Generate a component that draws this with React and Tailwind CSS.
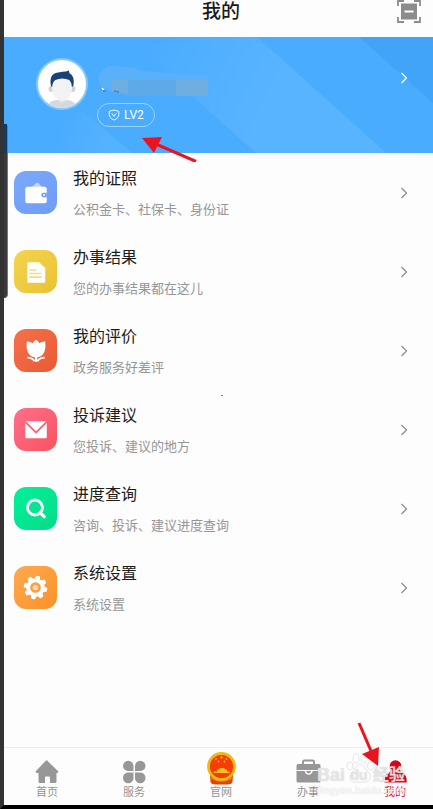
import React from 'react';

const menuItems = [
  { title: '我的证照', desc: '公积金卡、社保卡、身份证', icon: WalletIcon, bg: 'from-[#7aa9fa] to-[#6f9cf8]' },
  { title: '办事结果', desc: '您的办事结果都在这儿', icon: FileIcon, bg: 'from-[#f3d54e] to-[#e9c233]' },
  { title: '我的评价', desc: '政务服务好差评', icon: TulipIcon, bg: 'from-[#f5714a] to-[#e85a34]' },
  { title: '投诉建议', desc: '您投诉、建议的地方', icon: MailIcon, bg: 'from-[#ff6f8a] to-[#f9525f]' },
  { title: '进度查询', desc: '咨询、投诉、建议进度查询', icon: SearchIcon, bg: 'from-[#02f09a] to-[#07dc88]' },
  { title: '系统设置', desc: '系统设置', icon: GearIcon, bg: 'from-[#ffa950] to-[#fb9123]' },
];

const tabs = [
  { label: '首页', icon: HomeIcon },
  { label: '服务', icon: CloverIcon },
  { label: '官网', icon: EmblemIcon },
  { label: '办事', icon: BriefcaseIcon },
  { label: '我的', icon: PersonIcon, active: true },
];

function WalletIcon() {
  return (
    <svg viewBox="0 0 42 42" className="size-full">
      <path d="M17 16l5-4.500 2 .5 4 4z" fill="#c3d6fd" />
      <rect x="11" y="15.500" width="21" height="16" rx="2" fill="#fff" />
      <path d="M32 21.300h-3.200a2.200 2.200 0 0 0 0 4.400H32z" fill="#6f9ff8" />
      <circle cx="29.300" cy="23.500" r="1" fill="#fff" />
    </svg>
  );
}

function FileIcon() {
  return (
    <svg viewBox="0 0 42 42" className="size-full">
      <path d="M14 12h10.500l6 5.500V31q0 1-1 1H14q-1 0-1-1V13q0-1 1-1z" fill="#fff" />
      <path d="M15 19.500h7M15 23h12M15 26.500h12" stroke="#f2dc86" strokeWidth="1.600" />
    </svg>
  );
}

function TulipIcon() {
  return (
    <svg viewBox="0 0 42 42" className="size-full" fill="#fff">
      <path d="M21.500 10.500c1.200.6 2.500 2 3.200 3.300 1.600-1 3.800-1.600 5.700-1.600.5 3.600.5 7.300-.8 10.200-1.300 2.900-3.800 4.900-6.800 5.200V32h-2.400v-4.400c-3-.3-5.700-2.300-7-5.200-1.300-2.900-1.300-6.600-.8-10.200 1.900 0 4.100.6 5.700 1.600.7-1.300 2-2.700 3.200-3.300z" />
      <path d="M13 28c3 0 5.600 1 7 3.500M30 28c-3 0-5.600 1-7 3.500" fill="none" stroke="#fff" strokeWidth="1.800" />
    </svg>
  );
}

function MailIcon() {
  return (
    <svg viewBox="0 0 42 42" className="size-full">
      <rect x="11" y="13" width="21" height="16.500" rx="1" fill="#fff" />
      <path d="M11 13.500l10.500 10.500L32 13.500" fill="none" stroke="#fb6077" strokeWidth="1.800" />
    </svg>
  );
}

function SearchIcon() {
  return (
    <svg viewBox="0 0 42 42" className="size-full" fill="none" stroke="#fff">
      <circle cx="20.500" cy="20" r="7.300" strokeWidth="2.800" />
      <path d="M25.500 25l4 4" strokeWidth="3.200" strokeLinecap="round" />
    </svg>
  );
}

function GearIcon() {
  return (
    <svg viewBox="0 0 42 42" className="size-full">
      <g fill="#fff" transform="rotate(12 21 21)">
        <circle cx="21" cy="21" r="9" />
        {[0, 45, 90, 135, 180, 225, 270, 315].map((deg) => (
          <path key={deg} d="M19 12.500l.5-2.500h3l.5 2.500z" stroke="#fff" strokeLinejoin="round" transform={`rotate(${deg} 21 21)`} />
        ))}
      </g>
      <circle cx="21" cy="21" r="4" fill="#ffd9ac" stroke="#fd9c3a" strokeWidth="2.400" />
    </svg>
  );
}

function HomeIcon() {
  return (
    <svg viewBox="0 0 30 34" className="h-[34px] w-[30px]">
      <path d="M15 9.500L26.500 20.500 25.500 22H24.500v8.500q0 1.500-1.500 1.500h-5v-5.500q0-1-1-1h-3q-1 0-1 1V32H8q-1.500 0-1.500-1.500V22H4.500l-1-1.500L13.500 10q1.500-1.300 3 0z" fill="#979797" />
    </svg>
  );
}

function CloverIcon() {
  return (
    <svg viewBox="0 0 30 34" className="h-[34px] w-[30px]" fill="#979797">
      <path d="M4 15a5 5 0 0 1 10.500 0v5H9a5 5 0 0 1-5-5z" />
      <path d="M26.500 15a5 5 0 0 0-10.500 0v5h5.500a5 5 0 0 0 5-5z" />
      <path d="M4 27a5 5 0 0 0 10.500 0v-5.500H9A5 5 0 0 0 4 27z" />
      <path d="M26.500 27a5 5 0 0 1-10.500 0v-5.500h5.500a5 5 0 0 1 5 5.500z" />
    </svg>
  );
}

function EmblemIcon() {
  return (
    <svg viewBox="0 0 30 34" className="h-[34px] w-[30px]">
      <path d="M4 24h23l-.5 7q-1 2.500-5 2.500h-12q-4 0-5-2.500z" fill="#e8400b" />
      <path d="M5 27q10 6 21 0" stroke="#f07a12" strokeWidth="1.500" fill="none" />
      <circle cx="15.500" cy="15.500" r="13" fill="#f53d04" stroke="#edb912" strokeWidth="2.800" />
      <path d="M11 18.500h1.500L14 17h4l1.500 1.500H21v2h2.500V22h-16v-1.500H11z" fill="#ffbd22" />
      <g fill="#ffb020">
        <circle cx="15.500" cy="6.500" r="1.200" />
        <circle cx="10" cy="8" r=".9" />
        <circle cx="20.500" cy="8" r=".9" />
        <circle cx="12.500" cy="10.500" r=".9" />
        <circle cx="18.500" cy="10.500" r=".9" />
      </g>
    </svg>
  );
}

function BriefcaseIcon() {
  return (
    <svg viewBox="0 0 30 34" className="h-[34px] w-[30px]">
      <path d="M10 13.500v-2.500q0-1.500 1.500-1.500h8q1.500 0 1.500 1.500v2.500" fill="none" stroke="#979797" strokeWidth="2" />
      <path d="M5 13h21q1.500 0 1.500 1.500V19H3.500v-4.500Q3.500 13 5 13zM3.500 20h24V30q0 1.500-1.500 1.500H5Q3.500 31.500 3.500 30z" fill="#979797" />
      <path d="M12.500 19.500a3.200 3.500 0 0 0 6.400 0" fill="none" stroke="#fff" strokeWidth="1.600" />
    </svg>
  );
}

function PersonIcon() {
  return (
    <svg viewBox="0 0 30 34" className="h-[34px] w-[30px]" fill="#d4061b">
      <circle cx="15.500" cy="15" r="5.800" />
      <path d="M11 19h9q.5 2 3.500 3.500 3 2 3.200 7v2H4.500v-2q.2-5 3.200-7Q10.500 21 11 19z" />
    </svg>
  );
}

function Chevron({ className }) {
  return (
    <svg viewBox="0 0 8 12" className={`h-3 w-2 ${className}`} fill="none" stroke="currentColor" strokeWidth="1.200">
      <path d="M1.500 1l5 5-5 5" />
    </svg>
  );
}

function Avatar() {
  return (
    <svg viewBox="0 0 52 52" className="size-[52px] shrink-0" role="img" aria-label="头像">
      <clipPath id="face">
        <circle cx="26" cy="26" r="24" />
      </clipPath>
      <circle cx="26" cy="26" r="26" fill="#86c7fe" />
      <circle cx="26" cy="26" r="24" fill="#fff" />
      <g clipPath="url(#face)">
        <path d="M10 52q1-9 11-10h10q10 1 11 10z" fill="#d3d9e0" />
        <path d="M22 38h8v5q-4 5-8 0z" fill="#e6dfdc" />
        <circle cx="15.500" cy="31" r="3" fill="#d0d2d5" />
        <circle cx="36.500" cy="31" r="3" fill="#d0d2d5" />
        <path d="M16 27q0-8 10-8t10 8v4q-1 11-10 12-9-1-10-12z" fill="#f3f3f4" />
        <path d="M15 28.500q-2.500-13 7-14 5-1 8-1l3-1 .3 2.500q6 3 4 13.500h-1.500q0-4-2.500-6.500-7-3-14 0-3 2.500-3 6.500z" fill="#1c4275" />
      </g>
    </svg>
  );
}

function Banner() {
  return (
    <section className="relative flex h-[116px] items-start justify-between bg-[#4aacff] pl-8 pr-[25px] pt-[21px]">
      <svg viewBox="0 0 429 116" preserveAspectRatio="none" className="absolute inset-0 size-full">
        <defs>
          <linearGradient id="band" gradientUnits="userSpaceOnUse" x1="140" y1="10" x2="265" y2="70">
            <stop offset="0" stopColor="#4aacff" />
            <stop offset="1" stopColor="#59b4ff" />
          </linearGradient>
          <linearGradient id="corner" gradientUnits="userSpaceOnUse" x1="55" y1="95" x2="105" y2="110">
            <stop offset="0" stopColor="#4aacff" />
            <stop offset="1" stopColor="#55b2ff" />
          </linearGradient>
        </defs>
        <path d="M253 0l129 116H252L143 18 160 0z" fill="url(#band)" />
        <path d="M76 72L28 116h100z" fill="url(#corner)" />
        <path d="M355 0h74v66z" fill="#42a4f7" />
      </svg>
      <div className="relative flex gap-[9px]">
        <Avatar />
        <div className="flex flex-col items-start pt-2">
          <svg viewBox="0 0 112 32" className="h-8 w-28">
            <path d="M7 22Q-2 15 3 7 8-1 20 0l18 2 5 3 44 3 24 1v21H38l-22-4z" fill="#5ab1f9" />
            <path d="M15 14h96v16H36l-21-4z" fill="#5ea9e8" />
            <path d="M15 14h16v14l-16-3zM79 14h32v16H79z" fill="#70aee2" />
            <path d="M5 22l2 2" stroke="#fff" strokeWidth="1.500" />
            <path d="M6 25h3M17 25l5 1" stroke="#4a86b5" strokeWidth="1.500" />
          </svg>
          <button className="mt-[5px] flex h-6 items-center gap-1 rounded-full border border-[#9fd2ff] px-[10px] text-xs text-white">
            <svg viewBox="0 0 12 12" className="size-3" fill="none" stroke="#fff" strokeWidth=".9">
              <path d="M6 1l4.800 1.300v3.200Q10.500 9.500 6 11 1.500 9.500 1.200 5.500V2.300z" />
              <path d="M3.800 4.300L6 7.300l2.200-3" />
            </svg>
            LV2
          </button>
        </div>
      </div>
      <button aria-label="个人信息" className="relative mt-[14px] text-white">
        <Chevron />
      </button>
    </section>
  );
}

function Watermark() {
  return (
    <div className="pointer-events-none absolute bottom-2 right-7 w-[88px] font-['Liberation_Sans','Noto_Sans_CJK_SC',sans-serif] font-bold text-white/60">
      <svg viewBox="0 0 28 30" className="absolute -top-3 left-[29px] h-[30px] w-7" fill="#fff" fillOpacity=".6" stroke="#dedede" strokeWidth=".8">
        <ellipse cx="4" cy="13" rx="3" ry="4" />
        <ellipse cx="10" cy="5.500" rx="3" ry="4.500" />
        <ellipse cx="18" cy="5.500" rx="3" ry="4.500" />
        <ellipse cx="24.500" cy="13" rx="3" ry="4" />
        <path d="M14 11q4 1 6 6 6 4 4 9-2 4-10 3-8 1-10-3-1-5 4-9 2-5 6-6z" />
      </svg>
      <div className="relative flex items-center justify-between leading-5 [text-shadow:0_0_1px_#bbb]">
        <span className="text-lg leading-5">Bai</span>
        <span className="text-sm leading-5">du</span>
        <span className="text-base leading-5">经验</span>
      </div>
      <div className="text-[10px] leading-3 [text-shadow:0_0_1px_#ddd]">jingyan.baidu.com</div>
    </div>
  );
}

function App() {
  return (
    <div className="relative flex min-h-screen flex-col overflow-hidden border-b-4 border-l-4 border-b-black border-l-[#333] bg-[#fdfdfd] font-['Roboto','Noto_Sans_CJK_SC',sans-serif]">
      <header className="flex h-[37px] items-start pl-[41px] pr-3">
        <h1 className="flex-1 text-center text-[19px] font-medium leading-6 text-[#1a1a1a]">我的</h1>
        <button aria-label="扫一扫">
          <svg viewBox="0 0 24 24" className="size-6" fill="none" stroke="#8c8c8c" strokeWidth="1.800">
            <path d="M1 6V1h6M17 1h6v5M23 17v5h-6M7 22H1v-5" />
            <rect x="4" y="3.500" width="16" height="16" fill="#8c8c8c" stroke="none" />
            <path d="M7.500 11.500h9" stroke="#fff" strokeWidth="2" />
          </svg>
        </button>
      </header>

      <Banner />

      <ul>
        {menuItems.map(({ title, desc, icon: Icon, bg }) => (
          <li key={title}>
            <a href="#" className="flex items-center py-3 pl-[10px] pr-[25px]">
              <span className={`size-[43px] shrink-0 rounded-xl bg-linear-to-br ${bg}`}>
                <Icon />
              </span>
              <span className="ml-4 flex flex-1 flex-col gap-[7px]">
                <span className="text-base leading-7 text-[#1c1c1c]">{title}</span>
                <span className="text-[13px] leading-5 text-[#969696]">{desc}</span>
              </span>
              <Chevron className="text-[#8a8a8a]" />
            </a>
          </li>
        ))}
      </ul>

      <nav className="mt-auto flex h-[58px] justify-between border-t border-[#ededed] pl-[21px] pr-4">
        {tabs.map(({ label, icon: Icon, active }) => (
          <a
            key={label}
            href="#"
            className={`flex w-11 flex-col items-center pt-[3px] text-[11px] leading-4 ${active ? 'text-[#d4061b]' : 'text-[#929292]'}`}
          >
            <Icon />
            {label}
          </a>
        ))}
      </nav>

      {/* edge handle */}
      <div className="absolute left-0 top-[124px] h-[174px] w-1 rounded-r-sm border-r border-[#777] bg-[#3b3b3d]">
        <div className="h-[29px] bg-[#163b5c]" />
      </div>
      <div className="absolute left-[217px] top-[395px] h-px w-0.5 bg-[#777]" />

      <Watermark />

      <svg viewBox="0 0 56 26" className="absolute left-[137px] top-[136px] h-[26px] w-14">
        <path d="M16 8.500L55 25.500" stroke="#e9141d" strokeWidth="3" />
        <path d="M1 2l20-1-8 16z" fill="#e9141d" />
      </svg>
      <svg viewBox="0 0 24 46" className="absolute bottom-[38px] right-[53px] h-[46px] w-6">
        <path d="M3 2l12 28" stroke="#e9141d" strokeWidth="3" />
        <path d="M22 45L6 33l17-7z" fill="#e9141d" />
      </svg>
    </div>
  );
}

export default App;
